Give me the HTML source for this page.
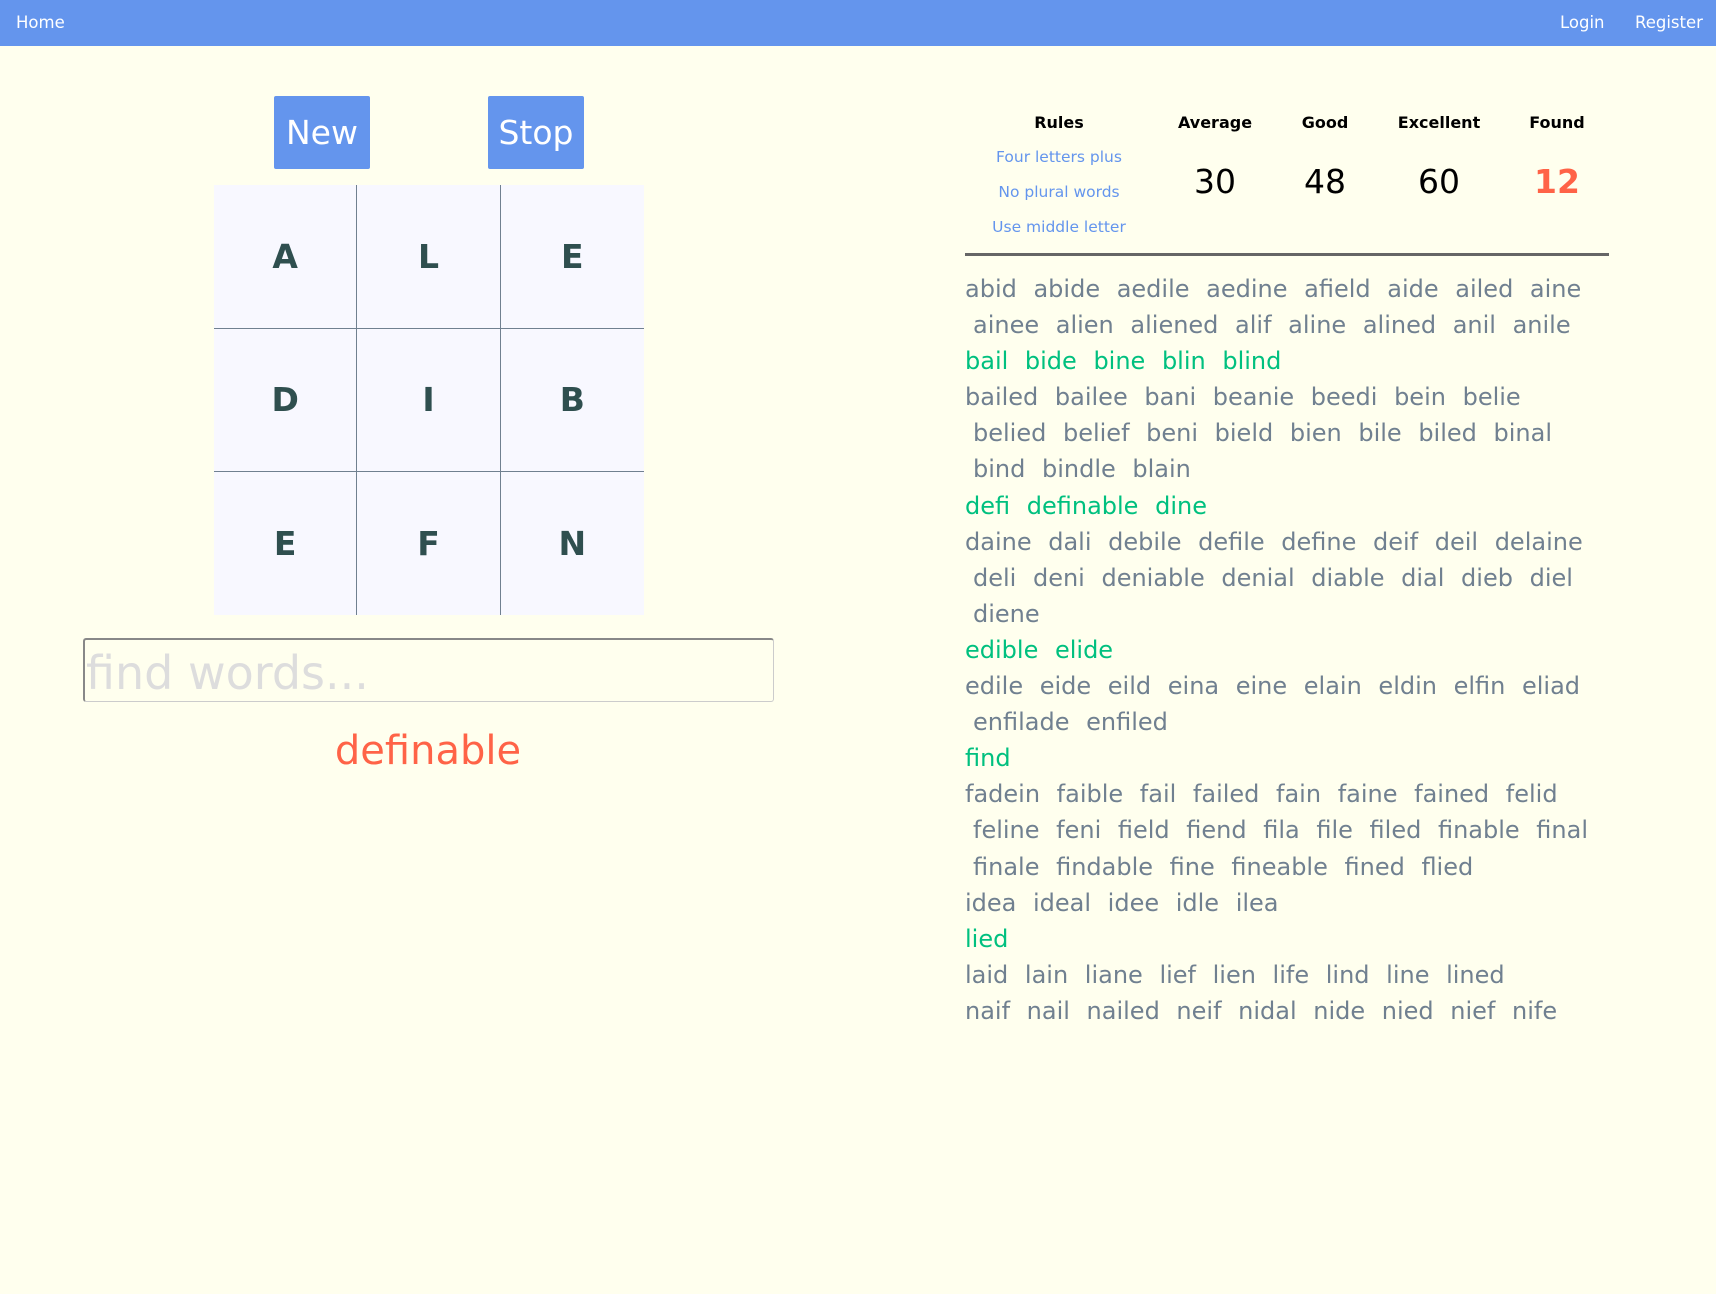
<!DOCTYPE html>
<html><head><meta charset="utf-8"><style>
body{margin:0;width:1716px;height:1294px;background:#ffffee;font-family:"DejaVu Sans","Liberation Sans",sans-serif;position:relative;overflow:hidden}
.nav{position:absolute;left:0;top:0;width:1716px;height:46px;background:#6495ed;color:#fff;font-size:16.5px}
.nav span{position:absolute;top:13px}
.btn{position:absolute;top:96px;width:96px;height:73px;background:#6495ed;color:#fff;font-size:33px;text-align:center;line-height:73px;border-radius:2px}
.grid{position:absolute;left:214px;top:185px;width:430px;height:430px;display:grid;grid-template-columns:repeat(3,1fr);background:#f8f8ff}
.grid div{display:flex;align-items:center;justify-content:center;font-weight:bold;font-size:33px;color:#2f4f4f;border-color:#708090;border-style:solid;border-width:0}
.input{position:absolute;left:83px;top:638px;width:691px;height:64px;border:1px solid #ccc;border-top:2px solid #888;border-left:2px solid #888;border-radius:3px;font-size:46px;color:#ddd;line-height:66px;padding-left:1px;box-sizing:border-box}
.found{position:absolute;left:228px;width:400px;top:728px;text-align:center;font-size:40px;color:#ff6347}
.c{position:absolute;text-align:center;transform:translateX(-50%);white-space:nowrap}
.h{font-weight:bold;font-size:16px;top:113px}
.r{font-size:15.5px;color:#6495ed}
.n{font-size:33px;top:162px}
.hr{position:absolute;left:965px;top:253px;width:644px;height:3px;background:#666}
.words{position:absolute;left:965px;top:271px;font-size:24px;line-height:36.1px;color:#708090;word-spacing:9px;white-space:pre}
.g{color:#00c07f}
.i{display:inline-block;width:8px}
</style></head><body>
<div class="nav"><span style="left:16px">Home</span><span style="left:1560px">Login</span><span style="left:1635px">Register</span></div>
<div class="btn" style="left:274px">New</div>
<div class="btn" style="left:488px">Stop</div>
<div class="grid">
<div style="border-right-width:1px;border-bottom-width:1px">A</div><div style="border-right-width:1px;border-bottom-width:1px">L</div><div style="border-bottom-width:1px">E</div>
<div style="border-right-width:1px;border-bottom-width:1px">D</div><div style="border-right-width:1px;border-bottom-width:1px">I</div><div style="border-bottom-width:1px">B</div>
<div style="border-right-width:1px">E</div><div style="border-right-width:1px">F</div><div>N</div>
</div>
<div class="input">find words...</div>
<div class="found">definable</div>
<div class="c h" style="left:1059px">Rules</div>
<div class="c h" style="left:1215px">Average</div>
<div class="c h" style="left:1325px">Good</div>
<div class="c h" style="left:1439px">Excellent</div>
<div class="c h" style="left:1557px">Found</div>
<div class="c r" style="left:1059px;top:148px">Four letters plus</div>
<div class="c r" style="left:1059px;top:183px">No plural words</div>
<div class="c r" style="left:1059px;top:218px">Use middle letter</div>
<div class="c n" style="left:1215px">30</div>
<div class="c n" style="left:1325px">48</div>
<div class="c n" style="left:1439px">60</div>
<div class="c n" style="left:1557px;color:#ff6347;font-weight:bold">12</div>
<div class="hr"></div>
<div class="words">abid abide aedile aedine afield aide ailed aine
<span class="i"></span>ainee alien aliened alif aline alined anil anile
<span class="g">bail bide bine blin blind</span>
bailed bailee bani beanie beedi bein belie
<span class="i"></span>belied belief beni bield bien bile biled binal
<span class="i"></span>bind bindle blain
<span class="g">defi definable dine</span>
daine dali debile defile define deif deil delaine
<span class="i"></span>deli deni deniable denial diable dial dieb diel
<span class="i"></span>diene
<span class="g">edible elide</span>
edile eide eild eina eine elain eldin elfin eliad
<span class="i"></span>enfilade enfiled
<span class="g">find</span>
fadein faible fail failed fain faine fained felid
<span class="i"></span>feline feni field fiend fila file filed finable final
<span class="i"></span>finale findable fine fineable fined flied
idea ideal idee idle ilea
<span class="g">lied</span>
laid lain liane lief lien life lind line lined
naif nail nailed neif nidal nide nied nief nife</div>
</body></html>
